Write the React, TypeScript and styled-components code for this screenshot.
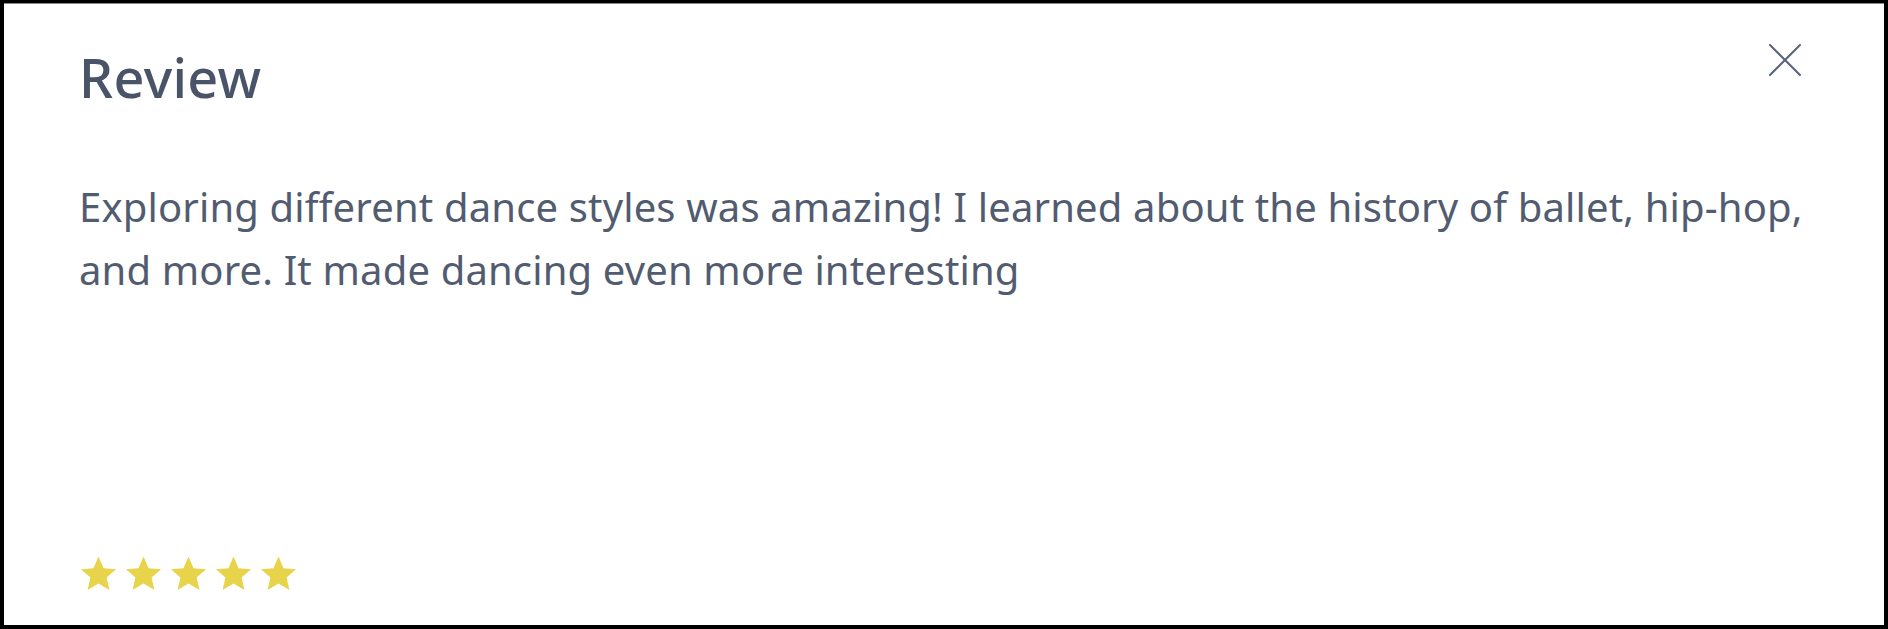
import styled, { createGlobalStyle } from 'styled-components';

const GlobalStyle = createGlobalStyle`
  html, body {
    margin: 0;
    padding: 0;
    background: #ffffff;
  }
  * {
    box-sizing: border-box;
  }
`;

const Card = styled.div`
  height: 629px;
  width: 1888px;
  background: #ffffff;
  border: 4px solid #000000;
  border-top-width: 3px;
  box-shadow: inset 0 1px 0 #8a8a8a;
  padding: 44px 30px 32px 75px;
  display: flex;
  flex-direction: column;
  font-family: 'Noto Sans', 'Open Sans', sans-serif;
  color: #4b5567;
`;

const Header = styled.div`
  display: flex;
  justify-content: space-between;
  align-items: flex-start;
`;

const Title = styled.h2`
  margin: 0;
  font-size: 54px;
  line-height: 60px;
  font-weight: 500;
  letter-spacing: 0.3px;
  color: #4a5468;
`;

const CloseButton = styled.button`
  border: none;
  background: none;
  padding: 0;
  margin: -5px 51px 0 0;
  width: 36px;
  height: 36px;
  cursor: pointer;
  color: #5a6478;
  display: flex;
  align-items: center;
  justify-content: center;
`;

const Body = styled.p`
  margin: 68px 0 0;
  font-size: 40px;
  line-height: 63px;
  font-weight: 400;
  letter-spacing: 0.15px;
  color: #525c70;
`;

const Stars = styled.div`
  margin-top: auto;
  display: flex;
  gap: 6px;
`;

const Star = ({ color }: { color: string }) => (
  <svg width="39" height="38" viewBox="0 0 24 23">
    <path
      d="M12 0.8l3.1 7.1 7.7.7-5.8 5.1 1.7 7.6L12 17.3l-6.7 4 1.7-7.6L1.2 8.6l7.7-.7z"
      fill={color}
    />
  </svg>
);

const App = () => {
  const rating = 5;

  return (
    <>
      <GlobalStyle />
      <Card>
        <Header>
          <Title>Review</Title>
          <CloseButton aria-label="Close">
            <svg width="34" height="34" viewBox="0 0 34 34">
              <path d="M2 2L32 32M32 2L2 32" stroke="currentColor" strokeWidth="2" strokeLinecap="round" />
            </svg>
          </CloseButton>
        </Header>
        <Body>
          Exploring different dance styles was amazing! I learned about the history of ballet, hip-hop, and more. It
          made dancing even more interesting
        </Body>
        <Stars>
          {Array.from({ length: rating }).map((_, idx) => (
            <Star key={idx} color="#e8d44b" />
          ))}
        </Stars>
      </Card>
    </>
  );
};

export default App;
